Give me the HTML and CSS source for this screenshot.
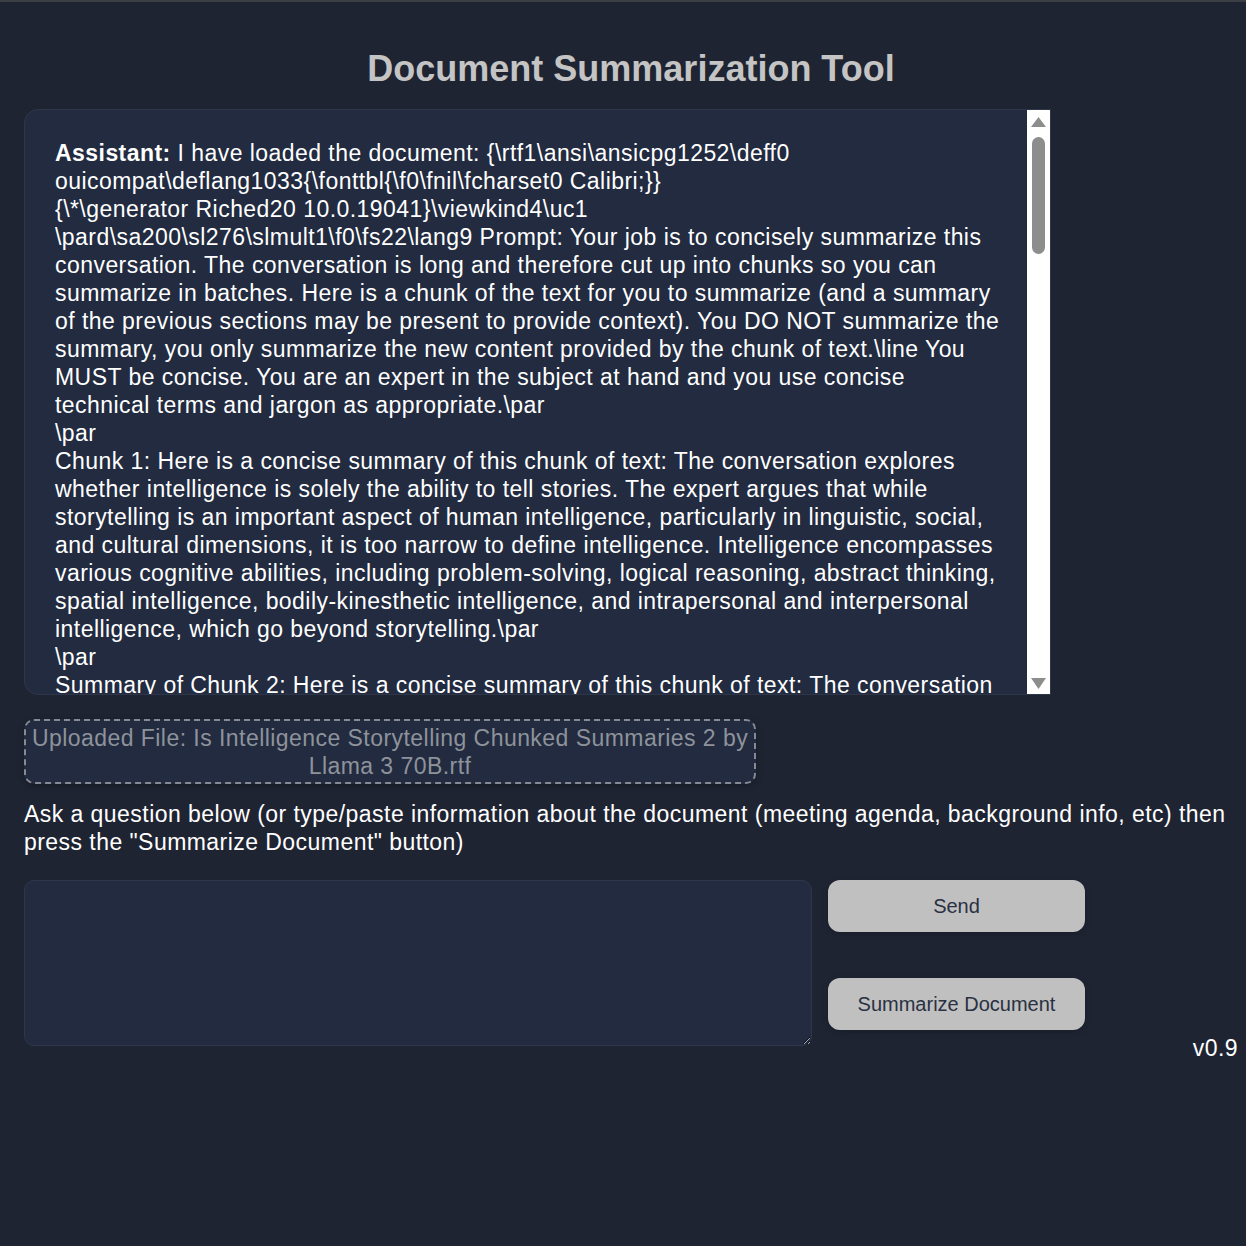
FILE: index.html
```html
<!DOCTYPE html>
<html lang="en">
<head>
<meta charset="utf-8">
<title>Document Summarization Tool</title>
<link rel="stylesheet" href="styles.css">
</head>
<body>
<div class="app">
  <h1 class="title">Document Summarization Tool</h1>

  <div class="chat">
    <div class="chat-text">
      <strong>Assistant:</strong> I have loaded the document: {\rtf1\ansi\ansicpg1252\deff0<br>
      ouicompat\deflang1033{\fonttbl{\f0\fnil\fcharset0 Calibri;}}<br>
      {\*\generator Riched20 10.0.19041}\viewkind4\uc1<br>
      \pard\sa200\sl276\slmult1\f0\fs22\lang9 Prompt: Your job is to concisely summarize this conversation. The conversation is long and therefore cut up into chunks so you can summarize in batches. Here is a chunk of the text for you to summarize (and a summary of the previous sections may be present to provide context). You DO NOT summarize the summary, you only summarize the new content provided by the chunk of text.\line You MUST be concise. You are an expert in the subject at hand and you use concise technical terms and jargon as appropriate.\par<br>
      \par<br>
      Chunk 1: Here is a concise summary of this chunk of text: The conversation explores whether intelligence is solely the ability to tell stories. The expert argues that while storytelling is an important aspect of human intelligence, particularly in linguistic, social, and cultural dimensions, it is too narrow to define intelligence. Intelligence encompasses various cognitive abilities, including problem-solving, logical reasoning, abstract thinking, spatial intelligence, bodily-kinesthetic intelligence, and intrapersonal and interpersonal intelligence, which go beyond storytelling.\par<br>
      \par<br>
      Summary of Chunk 2: Here is a concise summary of this chunk of text: The conversation continues by examining how narrative ability relates to other forms of reasoning.\par
    </div>
    <div class="scrollbar">
      <svg class="sb-arrow" width="15" height="10" viewBox="0 0 15 10"><polygon points="7.5,0 15,10 0,10" fill="#8d8d8d"/></svg>
      <div class="sb-thumb"></div>
      <div class="sb-space"></div>
      <svg class="sb-arrow" width="15" height="11" viewBox="0 0 15 11"><polygon points="0,0 15,0 7.5,11" fill="#8d8d8d"/></svg>
    </div>
  </div>

  <div class="upload">Uploaded File: Is Intelligence Storytelling Chunked Summaries 2 by Llama 3 70B.rtf</div>

  <p class="prompt">Ask a question below (or type/paste information about the document (meeting agenda, background info, etc) then press the "Summarize Document" button)</p>

  <div class="input-row">
    <textarea class="question"></textarea>
    <div class="buttons">
      <button class="btn">Send</button>
      <button class="btn">Summarize Document</button>
    </div>
    <div class="version">v0.9</div>
  </div>
</div>
</body>
</html>
```

FILE: styles.css
```css
html, body {
  margin: 0;
  padding: 0;
}

body {
  background: #1f2433;
  color: #ffffff;
  font-family: "Liberation Sans", Arial, sans-serif;
  border-top: 2px solid #3b3e45;
  min-height: 1244px;
}

.app {
  padding: 47px 8px 0 24px;
}

.title {
  margin: 0 0 20px;
  text-align: center;
  font-size: 36px;
  line-height: 40px;
  font-weight: bold;
  color: #c4c4c4;
}

.chat {
  display: flex;
  width: 1027px;
  height: 586px;
  box-sizing: border-box;
  background: #222b3f;
  border: 1px solid #2e374a;
  border-radius: 14px 0 0 14px;
  overflow: hidden;
}

.chat-text {
  flex: 1;
  overflow: hidden;
  padding: 29px 22px 0 30px;
  font-size: 23px;
  letter-spacing: 0.45px;
  line-height: 28px;
  color: #ffffff;
}

.chat-text strong {
  font-weight: bold;
}

.scrollbar {
  width: 23px;
  flex: none;
  background: #ffffff;
  display: flex;
  flex-direction: column;
  align-items: center;
  padding: 7px 0 5px;
  box-sizing: border-box;
}

.sb-arrow {
  display: block;
  flex: none;
}

.sb-thumb {
  width: 13px;
  height: 117px;
  margin-top: 10px;
  border-radius: 7px;
  background: #8d8d8d;
  flex: none;
}

.sb-space {
  flex: 1;
}

.upload {
  margin-top: 24px;
  width: 732px;
  box-sizing: border-box;
  padding: 3px 2px 2px;
  border: 2px dashed #858a93;
  border-radius: 10px;
  background: #222b3f;
  color: #8e939b;
  text-align: center;
  font-size: 23px;
  letter-spacing: 0.45px;
  line-height: 28px;
  box-shadow: 0 2px 6px rgba(0, 0, 0, 0.25);
}

.prompt {
  margin: 16px 0 24px;
  font-size: 23px;
  letter-spacing: 0.45px;
  line-height: 28px;
  color: #ffffff;
}

.input-row {
  display: flex;
  align-items: flex-start;
  gap: 16px;
}

.question {
  width: 788px;
  height: 166px;
  box-sizing: border-box;
  margin: 0;
  background: #222b3f;
  border: 1px solid #2e374a;
  border-radius: 10px;
  color: #ffffff;
  font-family: "Liberation Sans", Arial, sans-serif;
  font-size: 20px;
  padding: 10px;
  color-scheme: dark;
}

.buttons {
  display: flex;
  flex-direction: column;
  gap: 46px;
  width: 257px;
}

.btn {
  height: 52px;
  border: none;
  border-radius: 12px;
  background: #c0c0c0;
  color: #2a3142;
  font-family: "Liberation Sans", Arial, sans-serif;
  font-size: 20px;
  box-shadow: 0 2px 6px rgba(0, 0, 0, 0.2);
  cursor: pointer;
}

.version {
  margin-left: auto;
  align-self: flex-end;
  margin-bottom: -16px;
  font-size: 23px;
  letter-spacing: 0.45px;
  line-height: 28px;
  color: #ffffff;
}
```
